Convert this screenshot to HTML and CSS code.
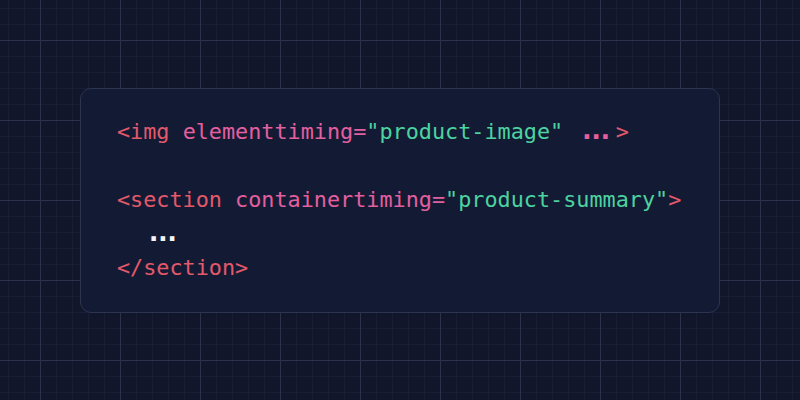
FILE: index.html
```html
<!DOCTYPE html>
<html lang="en">
<head>
<meta charset="utf-8">
<title>Element timing</title>
<link rel="stylesheet" href="styles.css">
</head>
<body>
<main class="stage">
  <pre class="card"><code><span class="line"><span class="tag">&lt;img</span> <span class="attr">elementtiming=</span><span class="str">"product-image"</span> <span class="dots attr">...</span><span class="tag">&gt;</span></span>
<span class="line"> </span>
<span class="line"><span class="tag">&lt;section</span> <span class="attr">containertiming=</span><span class="str">"product-summary"</span><span class="tag">&gt;</span></span>
<span class="line">  <span class="dots plain">...</span></span>
<span class="line"><span class="tag">&lt;/section&gt;</span></span></code></pre>
</main>
</body>
</html>
```
FILE: styles.css
```css
html, body {
  margin: 0;
  padding: 0;
}
body {
  width: 800px;
  height: 400px;
  background-color: #11162a;
  background-image:
    linear-gradient(to right, #2b324b 1px, transparent 1px),
    linear-gradient(to bottom, #2b324b 1px, transparent 1px),
    linear-gradient(to right, #181e36 1px, transparent 1px),
    linear-gradient(to bottom, #181e36 1px, transparent 1px);
  background-size: 80px 80px, 80px 80px, 16px 16px, 16px 16px;
  background-position: 40px 40px, 40px 40px, 8px 8px, 8px 8px;
  overflow: hidden;
}
.stage {
  width: 800px;
  height: 400px;
  display: flex;
  align-items: center;
  justify-content: center;
}
.card {
  box-sizing: border-box;
  width: 640px;
  margin: 0;
  padding: 26px 36px 27px;
  background: #131b34;
  border: 1px solid #2b3550;
  border-radius: 11px;
  font-family: "DejaVu Sans Mono", "Liberation Mono", monospace;
  font-size: 21.8px;
  line-height: 34px;
  color: #e8ecf5;
  white-space: pre;
}
.card code {
  font: inherit;
}
.tag {
  color: #e3596b;
}
.attr {
  color: #e35f9f;
}
.str {
  color: #4cd3a0;
}
.dots {
  display: inline-block;
  width: 39.4px;
  font-size: 27px;
  line-height: 20px;
  text-align: center;
  font-weight: bold;
  letter-spacing: -7px;
  text-indent: -7px;
  white-space: nowrap;
}
.dots.plain {
  color: #f2f4fa;
}
```
